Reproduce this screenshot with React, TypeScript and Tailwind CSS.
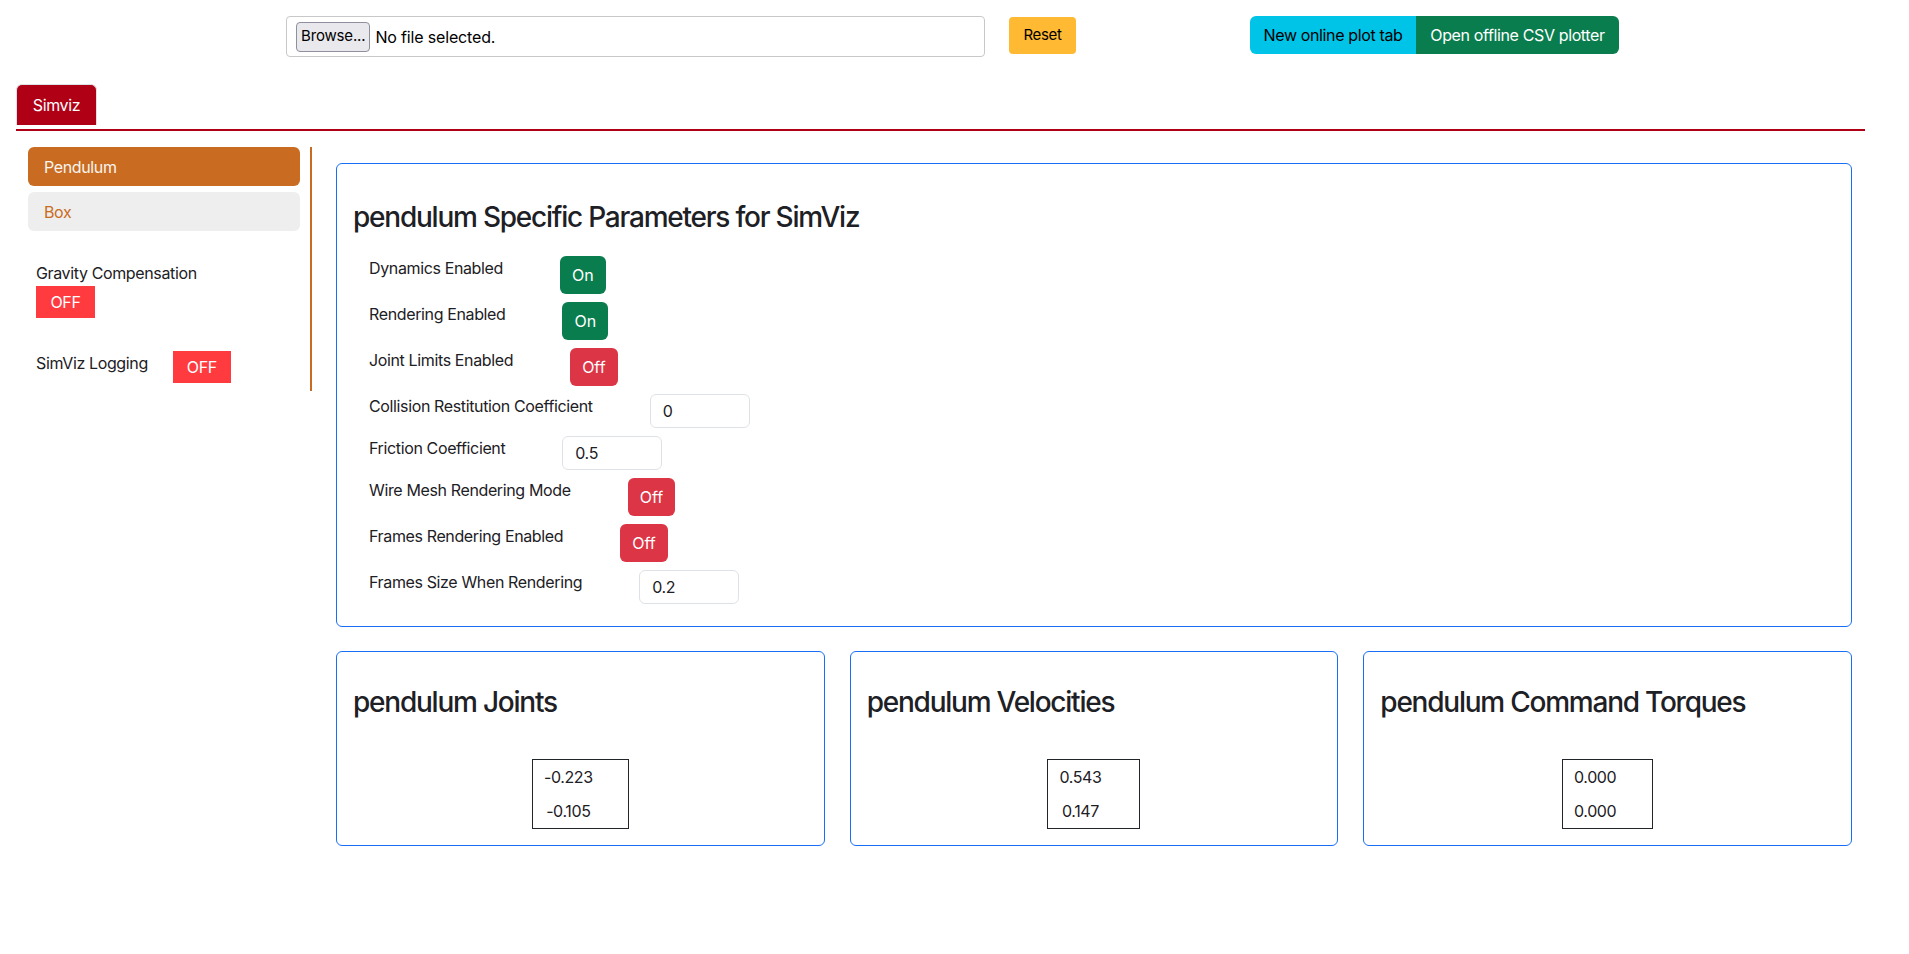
import React from 'react';

type Param =
  | { label: string; kind: 'toggle'; on: boolean }
  | { label: string; kind: 'input'; value: string };

const params: Param[] = [
  { label: 'Dynamics Enabled', kind: 'toggle', on: true },
  { label: 'Rendering Enabled', kind: 'toggle', on: true },
  { label: 'Joint Limits Enabled', kind: 'toggle', on: false },
  { label: 'Collision Restitution Coefficient', kind: 'input', value: '0' },
  { label: 'Friction Coefficient', kind: 'input', value: '0.5' },
  { label: 'Wire Mesh Rendering Mode', kind: 'toggle', on: false },
  { label: 'Frames Rendering Enabled', kind: 'toggle', on: false },
  { label: 'Frames Size When Rendering', kind: 'input', value: '0.2' },
];

const panels = [
  { title: 'pendulum Joints', values: ['-0.223', '-0.105'], box: 'w-[97px] pr-[26px]', cell: 'w-[71px]' },
  { title: 'pendulum Velocities', values: ['0.543', '0.147'], box: 'w-[93px] pr-[29px]', cell: 'w-[64px]' },
  { title: 'pendulum Command Torques', values: ['0.000', '0.000'], box: 'w-[91px] pr-[27px]', cell: 'w-[64px]' },
];

const ParamRow: React.FC<{ param: Param }> = ({ param }) => (
  <div className="mb-[8px] flex items-start">
    <span className="mr-[57px] leading-6">{param.label}</span>
    {param.kind === 'toggle' ? (
      <button
        className={`h-[38px] rounded-[6px] px-[12px] tracking-normal text-white ${
          param.on ? 'bg-[#0a7d4e]' : 'bg-[#dc3545]'
        }`}
      >
        {param.on ? 'On' : 'Off'}
      </button>
    ) : (
      <div className="flex h-[34px] w-[100px] items-center rounded-[6px] border border-[#dee2e6] px-[12px]">
        {param.value}
      </div>
    )}
  </div>
);

const App: React.FC = () => {
  return (
    <div className="min-h-screen bg-white font-['Inter','Noto_Sans',sans-serif] text-[16px] tracking-[-0.023em] text-[#1d2024]">
      {/* top bar */}
      <div className="flex items-start pl-[286px] pt-[16px]">
        <div className="flex h-[41px] w-[699px] items-center rounded-[4px] border border-[#c8c8c8] pl-[9px] tracking-[-0.01em]">
          <button className="h-[30px] rounded-[4px] border border-[#8f8f9d] bg-[#e9e9ed] px-[4px] text-[15px] text-black">
            Browse...
          </button>
          <span className="ml-[5px] text-[16px] text-black">No file selected.</span>
        </div>
        <button className="ml-[24px] mt-[1px] h-[37px] w-[67px] rounded-[4px] bg-[#ffb932] text-[15px] text-black">
          Reset
        </button>
        <div className="ml-[174px] flex h-[38px] overflow-hidden rounded-[6px]">
          <button className="w-[166px] bg-[#00c3e8] text-black">New online plot tab</button>
          <button className="w-[203px] bg-[#0a7d4e] text-white">Open offline CSV plotter</button>
        </div>
      </div>

      {/* tabs */}
      <div className="ml-[16px] mt-[27px] w-[1849px]">
        <div className="flex h-[41px] w-[81px] items-center justify-center rounded-t-[6px] border border-b-0 border-[#dee2e6] bg-[#b00016] text-white">
          Simviz
        </div>
        <div className="mt-[4px] h-[2px] bg-[#b00016]" />
      </div>

      <div className="ml-[16px] mt-[16px] flex items-start">
        {/* sidebar */}
        <div className="w-[296px] border-r-2 border-[#c96c21] pb-[8px] pl-[12px] pr-[10px]">
          <div className="flex h-[39px] items-center rounded-[6px] bg-[#c96c21] px-[16px] text-[#f8f4ef]">
            Pendulum
          </div>
          <div className="mt-[6px] flex h-[39px] items-center rounded-[6px] bg-[#eeeeee] px-[16px] text-[#c96c21]">
            Box
          </div>
          <div className="mt-[30px] pl-[8px]">
            <div className="leading-6">Gravity Compensation</div>
            <button className="mt-[1px] h-[32px] w-[59px] bg-[#ff3b3f] text-white">OFF</button>
          </div>
          <div className="mt-[33px] flex items-start pl-[8px]">
            <span className="leading-6">SimViz Logging</span>
            <button className="ml-[25px] h-[32px] w-[58px] bg-[#ff3b3f] text-white">OFF</button>
          </div>
        </div>

        {/* main content */}
        <div className="ml-[24px] mt-[16px] w-[1516px]">
          <div className="rounded-[6px] border border-[#1a6ef5] px-[16px] pb-[14px] pt-[37px]">
            <h3 className="mb-[21px] text-[28px] font-medium leading-[1.2] tracking-[-0.044em]">
              pendulum Specific Parameters for SimViz
            </h3>
            <div className="pl-[16px]">
              {params.map((p) => (
                <ParamRow key={p.label} param={p} />
              ))}
            </div>
          </div>

          <div className="mt-[24px] grid grid-cols-3 gap-[25px]">
            {panels.map((panel) => (
              <div
                key={panel.title}
                className="rounded-[6px] border border-[#1a6ef5] px-[16px] pb-[16px] pt-[34px]"
              >
                <h3 className="text-[28px] font-medium leading-[1.2] tracking-[-0.044em]">{panel.title}</h3>
                <div className="mt-[40px] flex justify-center">
                  <div className={`border border-[#212529] ${panel.box}`}>
                    {panel.values.map((v, i) => (
                      <div key={i} className={`h-[34px] text-center leading-[34px] ${panel.cell}`}>
                        {v}
                      </div>
                    ))}
                  </div>
                </div>
              </div>
            ))}
          </div>
        </div>
      </div>
    </div>
  );
};

export default App;
